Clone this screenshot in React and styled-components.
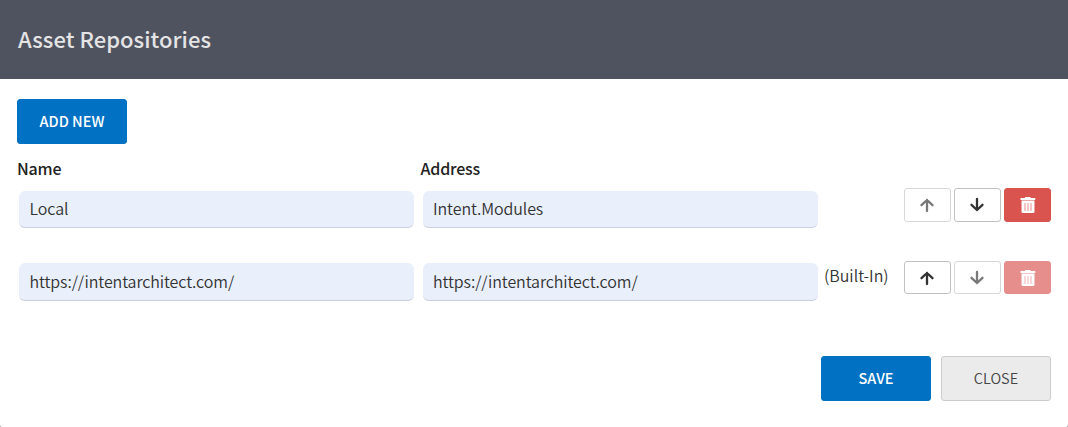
import React from "react";
import styled, { createGlobalStyle } from "styled-components";

const GlobalStyle = createGlobalStyle`
  *, *::before, *::after { box-sizing: border-box; }
  html, body { margin: 0; height: 100%; background: #8b8b8b; }
  body {
    font-family: "Noto Sans CJK SC", "Noto Sans", sans-serif;
    font-size: 16px;
    line-height: 24px;
    color: #333;
    overflow: hidden;
  }
  button, input { font: inherit; }
`;

const Dialog = styled.main`
  display: flex;
  flex-direction: column;
  width: 1068px;
  height: 427px;
  background: #fff;
  border-radius: 0 0 2px 2px;
  overflow: hidden;
`;

const Header = styled.header`
  display: flex;
  align-items: center;
  height: 79px;
  padding: 0 17px 4px 18px;
  background: #4f535f;
`;

const Title = styled.h1`
  margin: 0;
  font-size: 22px;
  line-height: 32px;
  font-weight: 500;
  letter-spacing: 0.04px;
  color: #e4e4e5;
`;

const Body = styled.section`
  display: flex;
  flex-direction: column;
  align-items: flex-start;
  padding: 20px 17px 0;
`;

const Button = styled.button`
  width: 110px;
  height: 45px;
  padding: 0 0 2px;
  border: 1px solid ${(p) => (p.$primary ? "#0071c3" : "#ccc")};
  border-radius: 3px;
  background: ${(p) => (p.$primary ? "#0071c3" : "#ebebeb")};
  color: ${(p) => (p.$primary ? "#fff" : "#444")};
  font-size: 14.5px;
  font-weight: ${(p) => (p.$primary ? 500 : 350)};
`;

const Grid = styled.div`
  display: grid;
  grid-template-columns: 403.5px 403.5px 1fr auto;
  width: 100%;
  margin-top: 12px;
`;

const Label = styled.div`
  height: 32px;
  font-weight: 500;
  letter-spacing: -0.2px;
  color: #222;
`;

const Field = styled.div`
  height: ${(p) => (p.$last ? "41px" : "72px")};
  padding: 3px 6px 0 2px;
`;

const Input = styled.input`
  display: block;
  width: 395px;
  height: ${(p) => (p.$tall ? "38px" : "37px")};
  padding: 0 10px 2px 10.5px;
  border: 0;
  border-bottom: 1px solid #c9cfdd;
  border-radius: 6px;
  background: #e9f0fb;
  color: #333;
  font-weight: 350;
  letter-spacing: -0.09px;
  outline: 0;
`;

const Note = styled.span`
  padding: 3px 0 0;
  font-weight: 350;
  white-space: nowrap;
`;

const Actions = styled.div`
  display: flex;
  gap: 3px;
`;

const IconButton = styled.button`
  display: flex;
  align-items: center;
  justify-content: center;
  width: 47px;
  height: ${(p) => (p.$short ? "33px" : "34px")};
  margin-top: ${(p) => (p.$short ? "1px" : "0")};
  padding: 0 ${(p) => (p.$danger ? "0" : "1px")} 0 0;
  border: 1px solid ${(p) => (p.$danger ? "#d9534f" : "#c2c2c2")};
  border-radius: 3px;
  background: ${(p) => (p.$danger ? "#d9534f" : "#fff")};
  color: ${(p) => (p.$danger ? "#fff" : "#333")};
  opacity: ${(p) => (p.disabled ? 0.65 : 1)};
`;

const Footer = styled.footer`
  display: flex;
  justify-content: flex-end;
  gap: 10px;
  margin-top: auto;
  padding: 0 17px 26px;
`;

const Arrow = ({ down }) => (
  <svg width="16" height="16" viewBox="0 0 16 16" fill="none" stroke="currentColor" strokeWidth="2.3" strokeLinecap="round" aria-hidden="true">
    <path d={down ? "M8 2v11M2.500 7.800L8 13l5.500-5.200" : "M8 14V3M2.500 8.200L8 3l5.500 5.200"} />
  </svg>
);

const Trash = () => (
  <svg width="16" height="18" viewBox="0 0 16 18" fill="currentColor" aria-hidden="true">
    <path d="M.5 2H5V1h5.500v1h4.800v2H.5z" />
    <path d="M1.500 4.500h13v11a1.500 1.500 0 0 1-1.500 1.500H3a1.500 1.500 0 0 1-1.500-1.500z" />
    <path d="M5 7v8M8 7v8M11 7v8" stroke="#d9534f" strokeOpacity="0.5" strokeWidth="1.300" />
  </svg>
);

const repositories = [
  { name: "Local", address: "Intent.Modules", builtIn: false },
  { name: "https://intentarchitect.com/", address: "https://intentarchitect.com/", builtIn: true },
];

export default function App() {
  return (
    <>
      <GlobalStyle />
      <Dialog>
        <Header>
          <Title>Asset Repositories</Title>
        </Header>
        <Body>
          <Button $primary>ADD NEW</Button>
          <Grid>
            <Label>Name</Label>
            <Label>Address</Label>
            <span />
            <span />
            {repositories.map((repo, i) => {
              const last = i === repositories.length - 1;
              return (
                <React.Fragment key={repo.name}>
                  <Field $last={last}>
                    <Input $tall={last} defaultValue={repo.name} aria-label="Name" />
                  </Field>
                  <Field $last={last}>
                    <Input $tall={last} defaultValue={repo.address} aria-label="Address" />
                  </Field>
                  <Note>{repo.builtIn && "(Built-In)"}</Note>
                  <Actions>
                    <IconButton $short={last} disabled={i === 0} aria-label="Move up">
                      <Arrow />
                    </IconButton>
                    <IconButton $short={last} disabled={last} aria-label="Move down">
                      <Arrow down />
                    </IconButton>
                    <IconButton $short={last} $danger disabled={repo.builtIn} aria-label="Delete">
                      <Trash />
                    </IconButton>
                  </Actions>
                </React.Fragment>
              );
            })}
          </Grid>
        </Body>
        <Footer>
          <Button $primary>SAVE</Button>
          <Button>CLOSE</Button>
        </Footer>
      </Dialog>
    </>
  );
}
